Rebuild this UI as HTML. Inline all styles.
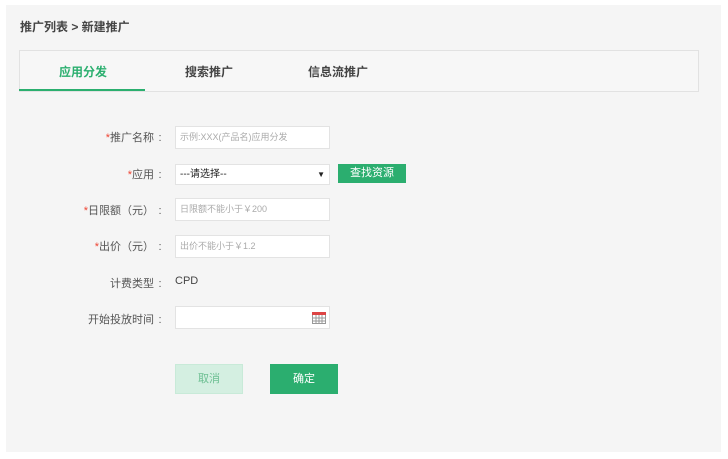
<!DOCTYPE html>
<html><head><meta charset="utf-8"><style>
*{margin:0;padding:0;box-sizing:border-box}
body{width:728px;height:459px;background:#fff;font-family:"Liberation Sans","Noto Sans CJK SC",sans-serif;position:relative;overflow:hidden;color:#555}
.panel{position:absolute;left:6px;top:5px;width:715px;height:447px;background:#f5f5f5}
.a{position:absolute}
.crumb{left:20px;top:18px;font-size:12px;font-weight:bold;color:#444}
.tabs{left:19px;top:50px;width:680px;height:42px;border:1px solid #e2e2e2;background:#f7f7f7}
.tab{position:absolute;top:12px;font-size:12px;font-weight:bold;color:#444;transform:translateX(-50%)}
.ul{left:19px;top:89px;width:126px;height:2px;background:#2baf6f}
.lbl{right:562px;font-size:11px;color:#555;text-align:right;white-space:nowrap}
.lbl i{color:#e43;font-style:normal}
.lbl b{font-weight:normal;display:inline-block;width:12px;text-align:center}
.inp{left:175px;width:155px;height:23px;background:#fff;border:1px solid #e3e3e3;font-size:9px;color:#aaa;padding-left:4px;line-height:21px}
.btn{font-size:11px;color:#fff;background:#2bae6f;text-align:center}
</style></head><body>
<div class="panel"></div>
<div class="a crumb">推广列表 &gt; 新建推广</div>
<div class="a tabs">
<span class="tab" style="left:63px;color:#2baf6f">应用分发</span>
<span class="tab" style="left:189px">搜索推广</span>
<span class="tab" style="left:318px">信息流推广</span>
</div>
<div class="a ul"></div>

<div class="a lbl" style="top:129px"><i>*</i>推广名称<b>:</b></div>
<div class="a inp" style="top:126px">示例:XXX(产品名)应用分发</div>

<div class="a lbl" style="top:166px"><i>*</i>应用<b>:</b></div>
<div class="a inp" style="top:164px;height:21px;color:#222;font-size:10px;line-height:19px">---请选择--<span style="position:absolute;right:4px;top:0;font-size:8px">▼</span></div>
<div class="a btn" style="left:338px;top:164px;width:68px;height:19px;line-height:19px">查找资源</div>

<div class="a lbl" style="top:202px"><i>*</i>日限额（元）<b>:</b></div>
<div class="a inp" style="top:198px">日限额不能小于￥200</div>

<div class="a lbl" style="top:238px"><i>*</i>出价（元）<b>:</b></div>
<div class="a inp" style="top:235px">出价不能小于￥1.2</div>

<div class="a lbl" style="top:275px">计费类型<b>:</b></div>
<div class="a" style="left:175px;top:275px;font-size:11px;color:#444">CPD</div>

<div class="a lbl" style="top:311px">开始投放时间<b>:</b></div>
<div class="a inp" style="top:306px"></div>
<svg class="a" style="left:312px;top:312px" width="14" height="12" viewBox="0 0 14 12"><rect x="0.5" y="0.5" width="13" height="11" fill="#fff" stroke="#999"/><rect x="0" y="0" width="14" height="3" fill="#d44"/><path d="M1 6H13M1 9H13M4 3V12M7 3V12M10 3V12" stroke="#999" stroke-width="1"/></svg>

<div class="a btn" style="left:175px;top:364px;width:68px;height:30px;line-height:28px;background:#d4efe1;color:#6cbf92;border:1px solid #c8ead8">取消</div>
<div class="a btn" style="left:270px;top:364px;width:68px;height:30px;line-height:30px">确定</div>
</body></html>
